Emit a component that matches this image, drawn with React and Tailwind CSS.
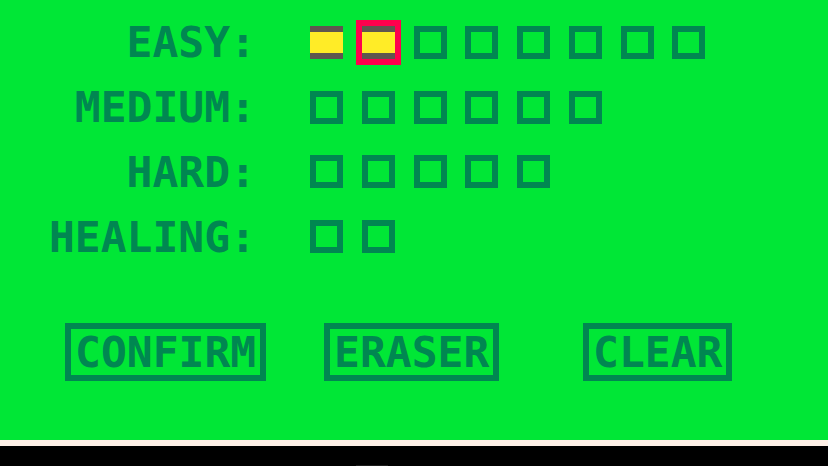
import { useState } from "react";
import clsx from "clsx";

const ROWS = [
  { id: "easy", label: "EASY:", slots: 8 },
  { id: "medium", label: "MEDIUM:", slots: 6 },
  { id: "hard", label: "HARD:", slots: 5 },
  { id: "healing", label: "HEALING:", slots: 2 },
];

function Slot({ name, filled, active, onClick }) {
  return (
    <button
      type="button"
      aria-label={name}
      aria-pressed={filled}
      onClick={onClick}
      className={clsx(
        "size-[33px] border-[#008751]",
        filled ? "border-y-6 border-y-[#5f574f] bg-[#ffec27]" : "border-6",
        active && "outline-6 outline-[#ff004d]"
      )}
    />
  );
}

function MenuButton({ children, onClick }) {
  return (
    <button
      type="button"
      onClick={onClick}
      className="h-[58px] justify-self-start border-6 border-[#008751] px-1 leading-[46px]"
    >
      {children}
    </button>
  );
}

export default function App() {
  const [filled, setFilled] = useState(["easy-0", "easy-1"]);
  const [active, setActive] = useState("easy-1");

  const pick = (key) => {
    setActive(key);
    if (!filled.includes(key)) setFilled([...filled, key]);
  };

  const erase = () => setFilled(filled.filter((key) => key !== active));

  return (
    <div className="flex min-h-screen flex-col bg-black font-['DejaVu_Sans_Mono',monospace] text-[43px] font-bold text-[#008751]">
      <main className="flex-1 border-b-6 border-[#fff1e8] bg-[#00e736] pt-[10px]">
        <div className="grid h-[259px] grid-rows-4">
          {ROWS.map((row) => (
            <div key={row.id} className="flex items-center gap-[54px]">
              <h2 id={row.id} className="w-[256px] text-right leading-[46px]">
                {row.label}
              </h2>
              <div role="group" aria-labelledby={row.id} className="grid w-[414px] grid-cols-8">
                {Array.from({ length: row.slots }, (_, i) => {
                  const key = `${row.id}-${i}`;
                  return (
                    <Slot
                      key={key}
                      name={`${row.id} ${i + 1}`}
                      filled={filled.includes(key)}
                      active={active === key}
                      onClick={() => pick(key)}
                    />
                  );
                })}
              </div>
            </div>
          ))}
        </div>

        <div className="mt-[54px] grid grid-cols-[259px_259px_auto] pb-[59px] pl-[65px]">
          <MenuButton>CONFIRM</MenuButton>
          <MenuButton onClick={erase}>ERASER</MenuButton>
          <MenuButton onClick={() => setFilled([])}>CLEAR</MenuButton>
        </div>
      </main>

      <footer className="flex h-5 items-end pl-[356px]">
        <div className="h-px w-8 bg-[#1d1d1d]" />
      </footer>
    </div>
  );
}
